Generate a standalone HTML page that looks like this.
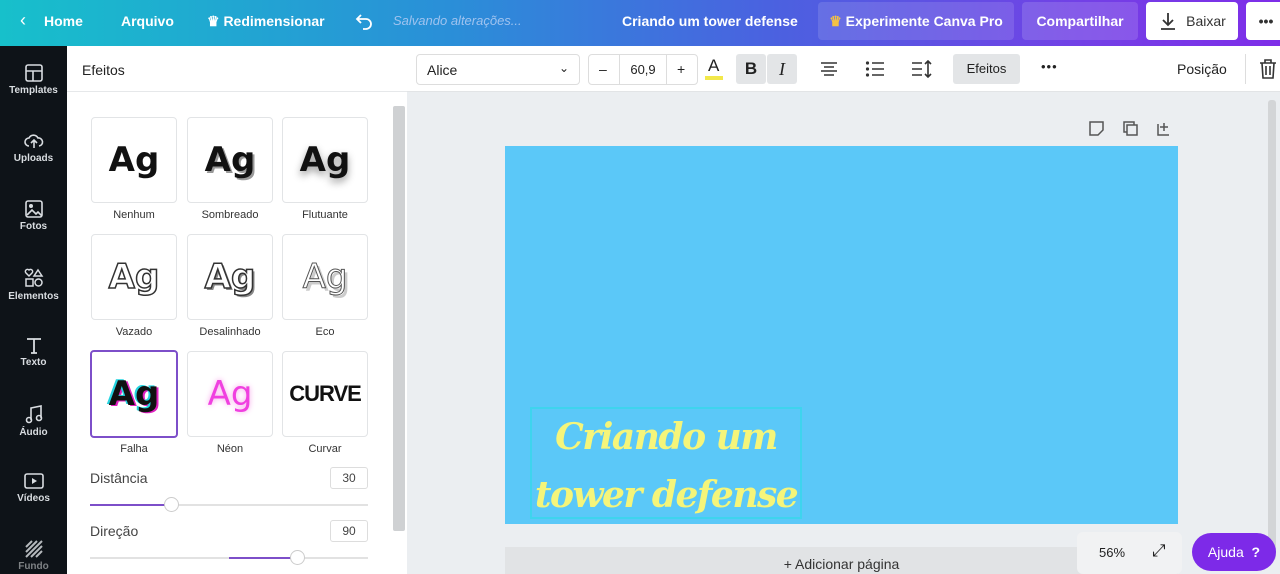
<!DOCTYPE html>
<html><head><meta charset="utf-8"><style>
*{box-sizing:border-box;margin:0;padding:0}
body{width:1280px;height:574px;overflow:hidden;font-family:"Liberation Sans",sans-serif;background:#ebeef1;position:relative}
.top{position:absolute;left:0;top:0;width:1280px;height:46px;background:linear-gradient(90deg,#17c0cb 0%,#2a8fd8 35%,#4a62e0 60%,#7340e6 85%,#7e2de8 100%);color:#fff;font-weight:bold;font-size:14px}
.top span{position:absolute;top:13px}
.btn{position:absolute;top:2px;height:38px;border-radius:4px;font-size:14px;font-weight:bold;display:flex;align-items:center;justify-content:center}
.side{position:absolute;left:0;top:46px;width:67px;height:528px;background:#0e1318;color:#d9dde1;font-size:10px;font-weight:bold;text-align:center}
.side div{position:absolute;left:0;width:67px}
.side svg{display:block;margin:0 auto 3px}
.panel{position:absolute;left:67px;top:46px;width:340px;height:528px;background:#fff}
.ph{height:46px;border-bottom:1px solid #e6e8ea;padding:16px 15px;font-size:14px;color:#222}
.card{position:absolute;width:86px;height:86px;border:1px solid #e2e4e6;border-radius:4px;display:flex;align-items:center;justify-content:center;font-size:34px;font-weight:bold;font-family:"DejaVu Sans",sans-serif;color:#111}
.lbl{position:absolute;width:86px;text-align:center;font-size:11px;color:#333}
.tool{position:absolute;left:407px;top:46px;width:873px;height:46px;background:#fff;border-bottom:1px solid #e2e4e6;font-size:14px;color:#222}
.tool>*{position:absolute}
</style></head><body>
<div class="top">
<span style="left:20px;font-weight:normal;font-size:18px;top:10px">&#8249;</span>
<span style="left:44px">Home</span><span style="left:121px">Arquivo</span>
<span style="left:207px">♛ Redimensionar</span>
<svg style="position:absolute;left:355px;top:12px" width="20" height="18"><path d="M6 3L2 7l4 4M2 7h9a5 5 0 010 10H8" fill="none" stroke="#fff" stroke-width="1.8"/></svg>
<span style="left:393px;font-weight:normal;font-style:italic;color:#9fc3ef;font-size:13px">Salvando alterações...</span>
<span style="left:622px">Criando um tower defense</span>
<div class="btn" style="left:818px;width:196px;background:rgba(255,255,255,.12)"><span style="position:static;color:#f5c242">♛&nbsp;</span>Experimente Canva Pro</div>
<div class="btn" style="left:1022px;width:116px;background:rgba(255,255,255,.14)">Compartilhar</div>
<div class="btn" style="left:1146px;width:92px;background:#fff;color:#333;font-weight:normal"><svg width="20" height="20" style="margin-right:8px"><path d="M10 2v12M5 9l5 5 5-5M3 18h14" fill="none" stroke="#333" stroke-width="1.8"/></svg>Baixar</div>
<div class="btn" style="left:1246px;width:40px;background:#fff;color:#333">•••</div>
</div>
<div class="side">
<div style="top:18px"><svg width="18" height="18"><rect x="1" y="1" width="16" height="16" rx="2" fill="none" stroke="#d9dde1" stroke-width="1.6"/><path d="M1 7h16M8 7v10" stroke="#d9dde1" stroke-width="1.6"/></svg>Templates</div>
<div style="top:86px"><svg width="20" height="18"><path d="M5 14a4 4 0 010-8 5 5 0 019 0 4 4 0 011 8M10 16V8M7 11l3-3 3 3" fill="none" stroke="#d9dde1" stroke-width="1.6"/></svg>Uploads</div>
<div style="top:154px"><svg width="18" height="18"><rect x="1" y="1" width="16" height="16" rx="2" fill="none" stroke="#d9dde1" stroke-width="1.6"/><circle cx="6" cy="6" r="2" fill="#d9dde1"/><path d="M2 15l5-5 4 4 2-2 4 4" fill="none" stroke="#d9dde1" stroke-width="1.6"/></svg>Fotos</div>
<div style="top:222px"><svg width="20" height="20"><path d="M5 8L2 5a2 2 0 013-3 2 2 0 013 3zM14 2l4 6h-8zM2 11h7v7H2z" fill="none" stroke="#d9dde1" stroke-width="1.5"/><circle cx="14.5" cy="14.5" r="3.5" fill="none" stroke="#d9dde1" stroke-width="1.5"/></svg>Elementos</div>
<div style="top:290px"><svg width="18" height="18"><path d="M2 3h14M9 3v14M6 17h6" stroke="#d9dde1" stroke-width="1.8" fill="none"/></svg>Texto</div>
<div style="top:358px"><svg width="18" height="20"><path d="M6 16V4l10-2v12" fill="none" stroke="#d9dde1" stroke-width="1.6"/><circle cx="4" cy="16" r="2.5" fill="none" stroke="#d9dde1" stroke-width="1.6"/><circle cx="14" cy="14" r="2.5" fill="none" stroke="#d9dde1" stroke-width="1.6"/></svg>Áudio</div>
<div style="top:426px"><svg width="20" height="18"><rect x="1" y="2" width="18" height="14" rx="2" fill="none" stroke="#d9dde1" stroke-width="1.6"/><path d="M8 6v6l5-3z" fill="#d9dde1"/></svg>Vídeos</div>
<div style="top:494px;color:#7d8184"><svg width="18" height="18"><path d="M1 7l6-6M1 12L12 1M1 17L17 1M6 17L17 6M11 17l6-6" stroke="#b5b9bc" stroke-width="2"/></svg>Fundo</div>
</div>
<div class="panel">
<div class="ph">Efeitos</div>
<div style="position:absolute;left:326px;top:60px;width:12px;height:425px;background:#cfd1d3;border-radius:2px"></div>
<div class="card" style="left:24px;top:71px">Ag</div>
<div class="card" style="left:120px;top:71px;text-shadow:2px 2px 0 #999">Ag</div>
<div class="card" style="left:215px;top:71px;text-shadow:0 4px 8px #999">Ag</div>
<div class="lbl" style="left:24px;top:163px">Nenhum</div><div class="lbl" style="left:120px;top:163px">Sombreado</div><div class="lbl" style="left:215px;top:163px">Flutuante</div>
<div class="card" style="left:24px;top:188px;color:#fff;-webkit-text-stroke:1.5px #333">Ag</div>
<div class="card" style="left:120px;top:188px;color:#fff;-webkit-text-stroke:1.5px #333;text-shadow:2px 2px 0 #888">Ag</div>
<div class="card" style="left:215px;top:188px;color:#fff;-webkit-text-stroke:1px #555;text-shadow:3px 3px 0 #ccc;font-weight:normal">Ag</div>
<div class="lbl" style="left:24px;top:280px">Vazado</div><div class="lbl" style="left:120px;top:280px">Desalinhado</div><div class="lbl" style="left:215px;top:280px">Eco</div>
<div class="card" style="left:23px;top:304px;width:88px;height:88px;border:2px solid #7d4fc9;text-shadow:-2px -1px 0 #25d4e0,2px 1px 0 #e020c0">Ag</div>
<div class="card" style="left:120px;top:305px;color:#f040e0;font-weight:normal;text-shadow:0 0 6px #f59ee8">Ag</div>
<div class="card" style="left:215px;top:305px;font-size:22px;font-family:'Liberation Sans',sans-serif;font-weight:900;letter-spacing:-1px">CURVE</div>
<div class="lbl" style="left:24px;top:397px">Falha</div><div class="lbl" style="left:120px;top:397px">Néon</div><div class="lbl" style="left:215px;top:397px">Curvar</div>
<div style="position:absolute;left:23px;top:424px;font-size:14px;color:#444">Distância</div>
<div style="position:absolute;left:263px;top:421px;width:38px;height:22px;border:1px solid #ddd;border-radius:3px;font-size:12px;text-align:center;line-height:20px;color:#444">30</div>
<div style="position:absolute;left:23px;top:458px;width:278px;height:2px;background:#e2e2e2"></div>
<div style="position:absolute;left:23px;top:458px;width:82px;height:2px;background:#7d4fc9"></div>
<div style="position:absolute;left:97px;top:451px;width:15px;height:15px;border-radius:50%;background:#fff;border:1px solid #ccc"></div>
<div style="position:absolute;left:23px;top:477px;font-size:14px;color:#444">Direção</div>
<div style="position:absolute;left:263px;top:474px;width:38px;height:22px;border:1px solid #ddd;border-radius:3px;font-size:12px;text-align:center;line-height:20px;color:#444">90</div>
<div style="position:absolute;left:23px;top:511px;width:278px;height:2px;background:#e2e2e2"></div>
<div style="position:absolute;left:162px;top:511px;width:68px;height:2px;background:#7d4fc9"></div>
<div style="position:absolute;left:223px;top:504px;width:15px;height:15px;border-radius:50%;background:#fff;border:1px solid #ccc"></div>
</div>
<div class="tool">
<div style="left:9px;top:8px;width:164px;height:31px;border:1px solid #ddd;border-radius:4px;padding:7px 10px">Alice<span style="position:absolute;right:10px;top:6px;font-size:12px">&#8964;</span></div>
<div style="left:181px;top:8px;width:110px;height:31px;border:1px solid #ddd;border-radius:4px"><span style="position:absolute;left:10px;top:6px">–</span><span style="position:absolute;left:30px;top:0;width:48px;height:29px;border-left:1px solid #ddd;border-right:1px solid #ddd;text-align:center;line-height:29px;font-size:13px">60,9</span><span style="position:absolute;left:88px;top:6px">+</span></div>
<div style="left:301px;top:10px;font-size:17px">A<div style="width:18px;height:4px;background:#f2e84a;margin-left:-3px"></div></div>
<div style="left:329px;top:8px;width:30px;height:30px;background:#e3e5e7;border-radius:3px;text-align:center;line-height:30px;font-weight:bold;font-size:17px">B</div>
<div style="left:360px;top:8px;width:30px;height:30px;background:#e3e5e7;border-radius:3px;text-align:center;line-height:30px;font-style:italic;font-family:'Liberation Serif',serif;font-size:18px">I</div>
<svg style="left:412px;top:15px" width="20" height="16"><path d="M2 2h16M5 6h10M2 10h16M5 14h10" stroke="#333" stroke-width="1.6"/></svg>
<svg style="left:458px;top:15px" width="20" height="16"><path d="M7 2h12M7 8h12M7 14h12" stroke="#333" stroke-width="1.6"/><circle cx="2.5" cy="2" r="1.6" fill="#333"/><circle cx="2.5" cy="8" r="1.6" fill="#333"/><circle cx="2.5" cy="14" r="1.6" fill="#333"/></svg>
<svg style="left:504px;top:14px" width="22" height="18"><path d="M1 3h10M1 9h10M1 15h10M17 1v16M14 4l3-3 3 3M14 14l3 3 3-3" stroke="#333" stroke-width="1.6" fill="none"/></svg>
<div style="left:546px;top:8px;width:67px;height:30px;background:#e3e5e7;border-radius:3px;text-align:center;line-height:30px;font-size:13px">Efeitos</div>
<div style="left:634px;top:13px;font-size:13px;letter-spacing:1px">•••</div>
<div style="left:770px;top:15px;font-size:14px">Posição</div>
<div style="left:838px;top:8px;width:1px;height:30px;background:#ddd"></div>
<svg style="left:852px;top:13px" width="18" height="20"><path d="M1 4h16M6 4V1h6v3M3 4l1 15h10l1-15M7 7v9M11 7v9" stroke="#333" stroke-width="1.6" fill="none"/></svg>
</div>
<svg style="position:absolute;left:1088px;top:120px" width="90" height="18"><path d="M2 2h13v8l-5 5H2z" fill="none" stroke="#555" stroke-width="1.5"/><rect x="36" y="2" width="10" height="10" fill="none" stroke="#555" stroke-width="1.5"/><rect x="39" y="5" width="10" height="10" fill="#ebeef1" stroke="#555" stroke-width="1.5"/><path d="M70 4v11h11M76 3v8M72 7h8" fill="none" stroke="#555" stroke-width="1.5"/></svg>
<div style="position:absolute;left:1268px;top:100px;width:8px;height:460px;background:#d3d5d7;border-radius:3px"></div>
<div style="position:absolute;left:505px;top:146px;width:673px;height:378px;background:#5bc8f8"></div>
<div style="position:absolute;left:530px;top:407px;width:272px;height:112px;border:2px solid #3ed4ee"></div>
<div style="position:absolute;left:530px;top:408px;width:272px;text-align:center;font-family:'DejaVu Serif',serif;font-style:italic;font-weight:bold;font-size:36px;line-height:58px;color:#f5f57a;letter-spacing:-1.5px">Criando um<br>tower defense</div>
<div style="position:absolute;left:505px;top:547px;width:673px;height:27px;background:#e1e3e5;text-align:center;font-size:14px;color:#333;padding-top:9px">+ Adicionar página</div>
<div style="position:absolute;left:1077px;top:532px;width:105px;height:42px;background:#f1f2f3;border-radius:6px"><span style="position:absolute;left:22px;top:13px;font-size:13px;color:#222">56%</span><span style="position:absolute;left:75px;top:9px;font-size:17px;color:#222">⤢</span></div>
<div style="position:absolute;left:1192px;top:533px;width:84px;height:38px;background:#7d2ae8;border-radius:19px;color:#fff;font-size:14px;text-align:center;line-height:38px">Ajuda &nbsp;<b>?</b></div>
</body></html>
